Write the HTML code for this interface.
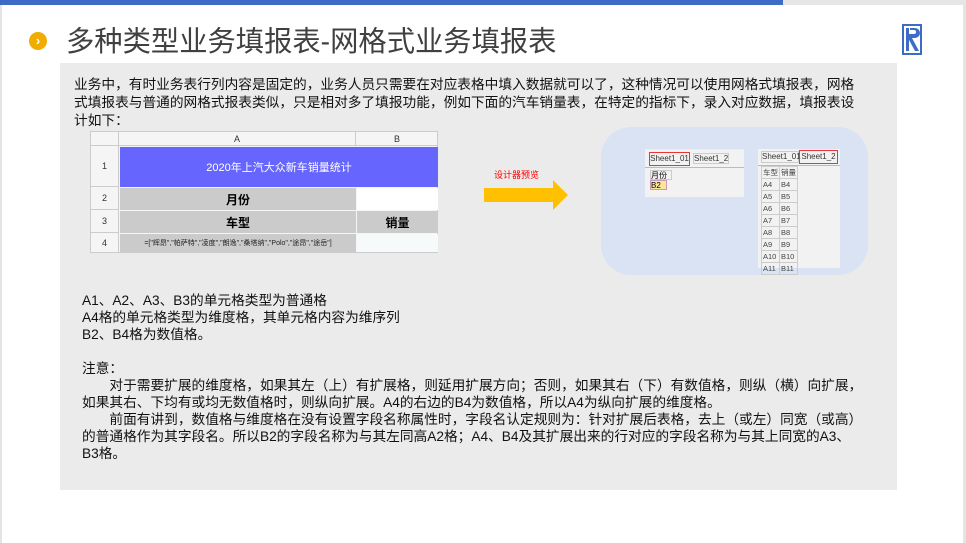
<!DOCTYPE html>
<html><head><meta charset="utf-8"><style>
*{margin:0;padding:0;box-sizing:border-box}
body{width:966px;height:543px;background:#fff;position:relative;overflow:hidden;font-family:"Liberation Sans","Noto Sans CJK SC",sans-serif}
.a{position:absolute}
.t{font-size:13.7px;color:#111;line-height:17px;white-space:nowrap}
.ss div{position:absolute;display:flex;align-items:center;justify-content:center}
.g{font-size:9px;color:#333}
td{padding:0 1px}
</style></head><body>
<div class="a" style="left:0;top:0;width:966px;height:5px;background:#e6e6e6"></div>
<div class="a" style="left:0;top:0;width:783px;height:5px;background:#3d6cc6"></div>
<div class="a" style="left:0;top:5px;width:2px;height:538px;background:#e4e4e4"></div>
<div class="a" style="left:963px;top:5px;width:3px;height:538px;background:#e4e4e4"></div>
<div class="a" style="left:29px;top:32px;width:18px;height:18px;border-radius:50%;background:#f0ad00;color:#fff;font-size:13px;font-weight:bold;text-align:center;line-height:18px">›</div>
<div class="a" style="left:66px;top:22px;font-size:28.3px;color:#404040;line-height:38px;white-space:nowrap">多种类型业务填报表-网格式业务填报表</div>
<svg class="a" style="left:902px;top:24px" width="20" height="31" viewBox="0 0 20 31"><rect width="20" height="31" fill="#3d6cc6"/><rect x="2" y="2" width="16" height="27" fill="#fff"/><rect x="4" y="4" width="3" height="23" fill="#3d6cc6"/><path d="M8 4h5a5 5 0 0 1 0 10h-3l7 13h-4l-7-13V10h6a2 2 0 0 0 0-4H8z" fill="#3d6cc6"/></svg>
<div class="a" style="left:60px;top:63px;width:837px;height:427px;background:#ebebeb"></div>
<div class="a t" style="left:74px;top:76px;line-height:18px">业务中，有时业务表行列内容是固定的，业务人员只需要在对应表格中填入数据就可以了，这种情况可以使用网格式填报表，网格<br>式填报表与普通的网格式报表类似，只是相对多了填报功能，例如下面的汽车销量表，在特定的指标下，录入对应数据，填报表设<br>计如下：</div>
<div class="a ss" style="left:90px;top:131px;width:348px;height:122px;background:#f5f5f5;border:1px solid #ccc">
<div style="left:0;top:0;width:28px;height:14px;border-right:1px solid #ccc;border-bottom:1px solid #ccc"></div>
<div class="g" style="left:28px;top:0;width:237px;height:14px;border-right:1px solid #ccc;border-bottom:1px solid #ccc">A</div>
<div class="g" style="left:265px;top:0;width:82px;height:14px;border-bottom:1px solid #ccc">B</div>
<div class="g" style="left:0;top:14px;width:28px;height:41px;border-bottom:1px solid #ccc;border-right:1px solid #ccc">1</div>
<div class="g" style="left:0;top:55px;width:28px;height:23px;border-bottom:1px solid #ccc;border-right:1px solid #ccc">2</div>
<div class="g" style="left:0;top:78px;width:28px;height:23px;border-bottom:1px solid #ccc;border-right:1px solid #ccc">3</div>
<div class="g" style="left:0;top:101px;width:28px;height:19px;border-right:1px solid #ccc">4</div>
<div style="left:29px;top:15px;width:318px;height:40px;background:#6666ff;color:#fff;font-size:11px">2020年上汽大众新车销量统计</div>
<div style="left:29px;top:56px;width:236px;height:22px;background:#cbcbcb;font-size:12px;font-weight:bold">月份</div>
<div style="left:266px;top:56px;width:81px;height:22px;background:#fff"></div>
<div style="left:29px;top:79px;width:236px;height:22px;background:#cbcbcb;font-size:12px;font-weight:bold">车型</div>
<div style="left:266px;top:79px;width:81px;height:22px;background:#cbcbcb;font-size:12px;font-weight:bold">销量</div>
<div style="left:29px;top:102px;width:236px;height:18px;background:#cbcbcb;font-size:7px;color:#222">=["辉昂","帕萨特","凌度","朗逸","桑塔纳","Polo","途昂","途岳"]</div>
<div style="left:266px;top:102px;width:81px;height:18px;background:#f7fafb"></div>
</div>
<div class="a" style="left:494px;top:168px;font-size:9px;color:#f00">设计器预览</div>
<svg class="a" style="left:484px;top:180px" width="85" height="31"><path d="M0 8h69V0l15 15-15 15v-8H0z" fill="#ffc000"/></svg>
<div class="a" style="left:601px;top:127px;width:267px;height:148px;border-radius:30px;background:#dae3f3"></div>
<div class="a" style="left:645px;top:149px;width:99px;height:48px;background:#f2f2f2;border-top:1px solid #eee"></div>
<div class="a" style="left:649px;top:152px;width:41px;height:14px;border:1.5px solid #e33;font-size:8px;color:#333;text-align:center;line-height:11px">Sheet1_01</div>
<div class="a" style="left:693px;top:153px;width:36px;height:11px;border:1px solid #ccc;font-size:8px;color:#333;text-align:center;line-height:10px">Sheet1_2</div>
<div class="a" style="left:645px;top:167px;width:99px;height:1px;background:#bbb"></div>
<div class="a" style="left:650px;top:170px;width:22px;height:10px;border:1px solid #ccc;font-size:8px;line-height:9px;white-space:nowrap">月份</div>
<div class="a" style="left:650px;top:180px;width:17px;height:10px;background:#fbe79a;border:1px solid #c9b;font-size:8px;line-height:9px">B2</div>
<div class="a" style="left:758px;top:149px;width:82px;height:119px;background:#f2f2f2"></div>
<div class="a" style="left:761px;top:151px;width:38px;height:12px;border:1px solid #ccc;font-size:8px;color:#333;text-align:center;line-height:10px">Sheet1_01</div>
<div class="a" style="left:799px;top:150px;width:39px;height:14px;border:1.5px solid #e33;font-size:8px;color:#333;text-align:center;line-height:11px">Sheet1_2</div>
<div class="a" style="left:758px;top:165px;width:82px;height:1px;background:#bbb"></div>
<div class="a" style="left:761px;top:166px;font-size:7.5px;color:#444;line-height:11px">
<table style="border-collapse:collapse;font-size:7.5px;white-space:nowrap"><tr><td style="border:1px solid #ccc;width:17px;height:11px">车型</td><td style="border:1px solid #ccc;width:17px">销量</td></tr>
<tr><td style="border:1px solid #ccc;height:11px">A4</td><td style="border:1px solid #ccc">B4</td></tr>
<tr><td style="border:1px solid #ccc;height:11px">A5</td><td style="border:1px solid #ccc">B5</td></tr>
<tr><td style="border:1px solid #ccc;height:11px">A6</td><td style="border:1px solid #ccc">B6</td></tr>
<tr><td style="border:1px solid #ccc;height:11px">A7</td><td style="border:1px solid #ccc">B7</td></tr>
<tr><td style="border:1px solid #ccc;height:11px">A8</td><td style="border:1px solid #ccc">B8</td></tr>
<tr><td style="border:1px solid #ccc;height:11px">A9</td><td style="border:1px solid #ccc">B9</td></tr>
<tr><td style="border:1px solid #ccc;height:11px">A10</td><td style="border:1px solid #ccc">B10</td></tr>
<tr><td style="border:1px solid #ccc;height:11px">A11</td><td style="border:1px solid #ccc">B11</td></tr></table></div>
<div class="a t" style="left:82px;top:292px">A1、A2、A3、B3的单元格类型为普通格<br>A4格的单元格类型为维度格，其单元格内容为维序列<br>B2、B4格为数值格。<br><br>注意：<br>　　对于需要扩展的维度格，如果其左（上）有扩展格，则延用扩展方向；否则，如果其右（下）有数值格，则纵（横）向扩展，<br>如果其右、下均有或均无数值格时，则纵向扩展。A4的右边的B4为数值格，所以A4为纵向扩展的维度格。<br>　　前面有讲到，数值格与维度格在没有设置字段名称属性时，字段名认定规则为：针对扩展后表格，去上（或左）同宽（或高）<br>的普通格作为其字段名。所以B2的字段名称为与其左同高A2格；A4、B4及其扩展出来的行对应的字段名称为与其上同宽的A3、<br>B3格。</div>
</body></html>
